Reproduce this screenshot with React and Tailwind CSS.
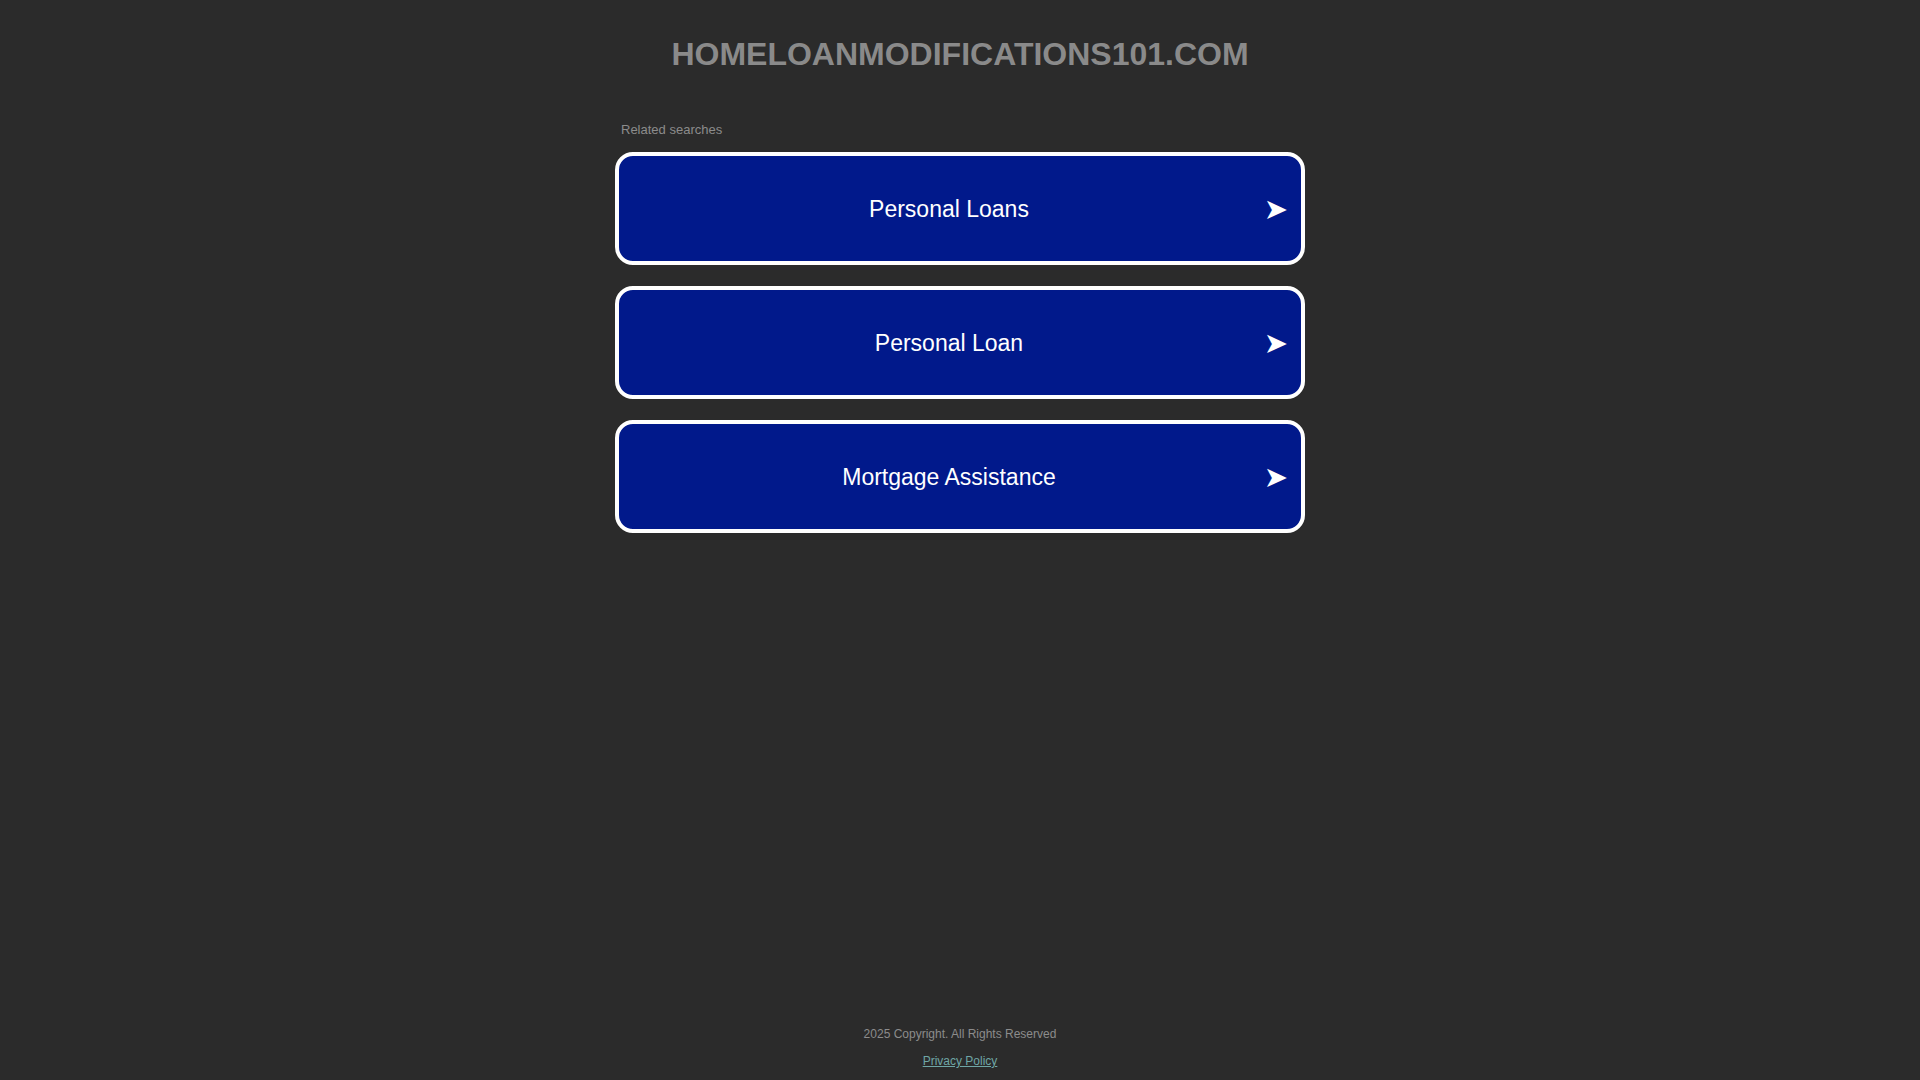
const searches = ['Personal Loans', 'Personal Loan', 'Mortgage Assistance']

function SearchBox({ label }) {
  return (
    <a
      href="#"
      className="relative flex h-[113px] items-center rounded-[18px] border-4 border-white bg-[#01198b] pr-[22px] text-white"
    >
      <span className="flex-1 text-center text-[23px] leading-7">{label}</span>
      <span className="absolute right-[13px] top-1/2 -translate-y-1/2 font-['DejaVu_Sans',sans-serif] text-[29px] leading-none">
        ➤
      </span>
    </a>
  )
}

export default function App() {
  return (
    <div className="flex min-h-screen flex-col bg-[#2b2b2b] font-['Liberation_Sans',Arial,sans-serif]">
      <h1 className="pt-[36px] text-center text-[32px] font-bold leading-9 text-[#8a8a8a]">
        HOMELOANMODIFICATIONS101.COM
      </h1>

      <div className="mx-auto mt-[50px] w-[690px]">
        <p className="pl-[6px] text-[13px] leading-4 text-[#8c8c8c]">Related searches</p>
        <div className="mt-[14px] flex flex-col gap-[21px]">
          {searches.map((s) => (
            <SearchBox key={s} label={s} />
          ))}
        </div>
      </div>

      <footer className="mt-auto flex flex-col items-center gap-[11px] pb-[11px] text-[12px] leading-4">
        <p className="text-[#8c8c8c]">2025 Copyright. All Rights Reserved</p>
        <a href="#" className="text-[#6fa6a6] underline">
          Privacy Policy
        </a>
      </footer>
    </div>
  )
}
